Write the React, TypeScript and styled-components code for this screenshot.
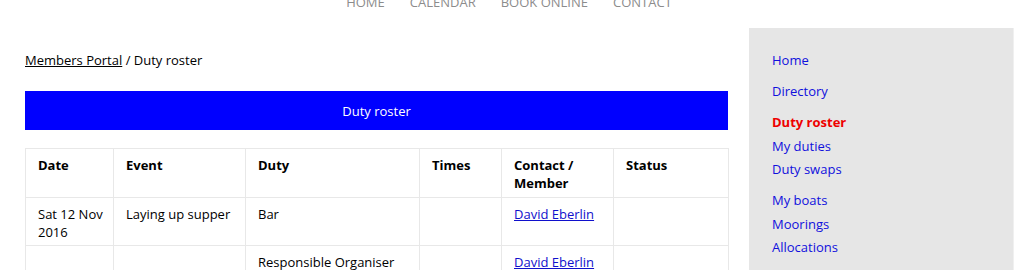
import React from 'react';
import styled, { createGlobalStyle } from 'styled-components';

const GlobalStyle = createGlobalStyle`
  body {
    margin: 0;
    background: #fff;
    font-family: "Open Sans", "Liberation Sans", sans-serif;
    font-size: 13px;
    color: #000;
  }
`;

const Page = styled.div`
  width: 1018px;
  height: 270px;
  overflow: hidden;
`;

const TopNav = styled.nav`
  height: 28px;
  display: flex;
  justify-content: center;
  gap: 25px;
  overflow: hidden;
`;

const NavItem = styled.a`
  margin-top: -7px;
  line-height: 18px;
  font-size: 13px;
  color: #8c8c8c;
  text-transform: uppercase;
  text-decoration: none;
`;

const Body = styled.div`
  display: flex;
  align-items: flex-start;
  gap: 21px;
  padding-left: 25px;
`;

const Main = styled.main`
  width: 703px;
  padding-top: 23px;
`;

const Breadcrumb = styled.div`
  line-height: 18px;

  a {
    color: #000;
    text-decoration: underline;
  }
`;

const TitleBar = styled.div`
  margin-top: 22px;
  height: 39px;
  background: #0000ff;
  color: #fff;
  display: flex;
  align-items: center;
  justify-content: center;
`;

const Table = styled.table`
  margin-top: 18px;
  width: 703px;
  border-collapse: collapse;
  table-layout: fixed;
`;

const Th = styled.th`
  text-align: left;
  vertical-align: top;
  font-weight: 700;
  line-height: 18px;
  padding: 7px 6px 5px 12px;
  border: 1px solid #e8e8e8;
`;

const Td = styled.td`
  vertical-align: top;
  line-height: 18px;
  padding: 7px 6px 4px 12px;
  border: 1px solid #e8e8e8;
  height: 36px;
`;

const MemberLink = styled.a`
  color: #1010cc;
  text-decoration: underline;
`;

const Sidebar = styled.aside`
  width: 241px;
  height: 262px;
  background: #e6e6e6;
  padding: 21px 0 0 23px;
  border-right: 1px solid #f0f0f0;
`;

const LinkGroup = styled.div`
  display: flex;
  flex-direction: column;
  margin-bottom: 7.5px;
`;

const SideLink = styled.a<{ $active?: boolean }>`
  line-height: 23.5px;
  color: ${(p) => (p.$active ? '#ee0000' : '#1010dd')};
  font-weight: ${(p) => (p.$active ? 700 : 400)};
  text-decoration: none;
`;

const columns = [
  { label: 'Date', w: 88 },
  { label: 'Event', w: 132 },
  { label: 'Duty', w: 174 },
  { label: 'Times', w: 82 },
  { label: 'Contact / Member', w: 112 },
  { label: 'Status', w: 115 },
];

const rows = [
  { date: 'Sat 12 Nov 2016', event: 'Laying up supper', duty: 'Bar', member: 'David Eberlin' },
  { date: '', event: '', duty: 'Responsible Organiser', member: 'David Eberlin' },
];

const sideGroups = [
  [{ label: 'Home' }],
  [{ label: 'Directory' }],
  [{ label: 'Duty roster', active: true }, { label: 'My duties' }, { label: 'Duty swaps' }],
  [{ label: 'My boats' }, { label: 'Moorings' }, { label: 'Allocations' }],
];

export default function App() {
  return (
    <Page>
      <GlobalStyle />
      <TopNav>
        {['Home', 'Calendar', 'Book online', 'Contact'].map((n) => (
          <NavItem key={n} href="#">
            {n}
          </NavItem>
        ))}
      </TopNav>
      <Body>
        <Main>
          <Breadcrumb>
            <a href="#">Members Portal</a> / Duty roster
          </Breadcrumb>
          <TitleBar>Duty roster</TitleBar>
          <Table>
            <colgroup>
              {columns.map((c) => (
                <col key={c.label} style={{ width: c.w }} />
              ))}
            </colgroup>
            <thead>
              <tr>
                {columns.map((c) => (
                  <Th key={c.label}>{c.label}</Th>
                ))}
              </tr>
            </thead>
            <tbody>
              {rows.map((r, i) => (
                <tr key={i}>
                  <Td>{r.date}</Td>
                  <Td>{r.event}</Td>
                  <Td>{r.duty}</Td>
                  <Td />
                  <Td>
                    <MemberLink href="#">{r.member}</MemberLink>
                  </Td>
                  <Td />
                </tr>
              ))}
            </tbody>
          </Table>
        </Main>
        <Sidebar>
          {sideGroups.map((g, i) => (
            <LinkGroup key={i}>
              {g.map((l) => (
                <SideLink key={l.label} href="#" $active={l.active}>
                  {l.label}
                </SideLink>
              ))}
            </LinkGroup>
          ))}
        </Sidebar>
      </Body>
    </Page>
  );
}
